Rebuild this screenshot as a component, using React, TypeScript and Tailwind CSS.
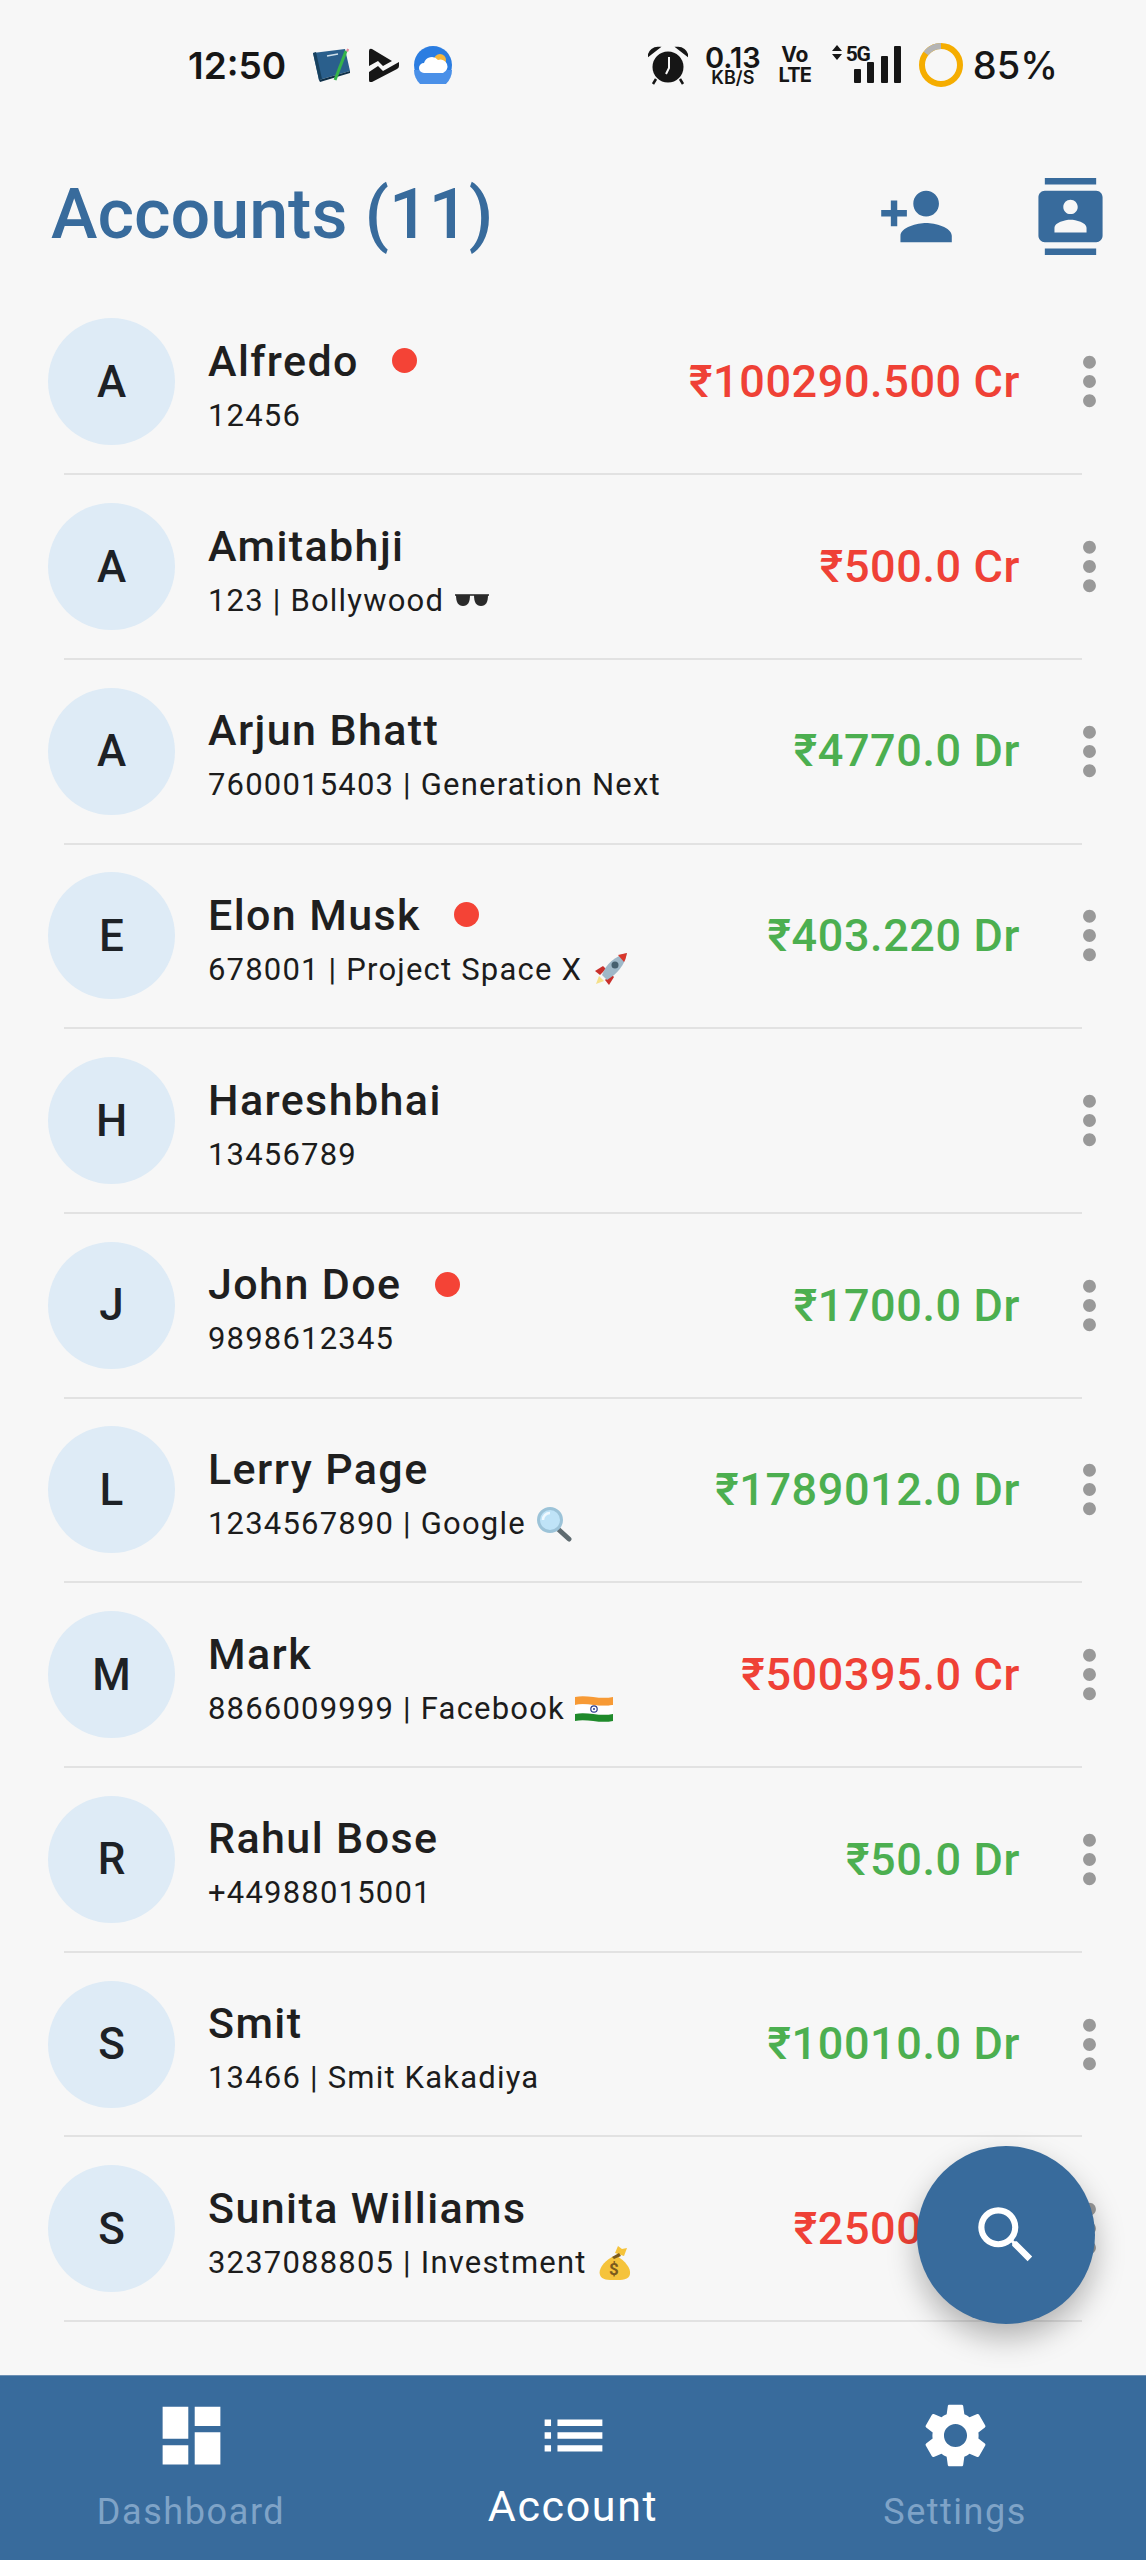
import type { ReactNode } from "react";
import {
  MdContacts,
  MdDashboard,
  MdList,
  MdMoreVert,
  MdPersonAdd,
  MdSearch,
  MdSettings,
} from "react-icons/md";

function Shades() {
  return (
    <svg viewBox="0 0 36 20" className="h-[20px] w-[36px]">
      <path d="M1 3h34v2H1z" fill="#555" />
      <path d="M2 4h14c0 7-2 11-7 11S2 11 2 4z" fill="#2a2a2a" />
      <path d="M20 4h14c0 7-2 11-7 11s-7-4-7-11z" fill="#2a2a2a" />
    </svg>
  );
}

function Rocket() {
  return (
    <svg viewBox="0 0 36 36" className="h-[36px] w-[36px]">
      <path d="M4 32l3-8 5 5z" fill="#f5e08a" />
      <path d="M3 19l8-5 3 3-6 6z" fill="#c9302c" />
      <path d="M17 33l5-8-3-3-6 6z" fill="#c9302c" />
      <path d="M10 23C14 12 23 4 35 1c-2 12-10 21-20 27z" fill="#9fb8c8" />
      <path d="M26 3l9-2c-1 3-1 6-3 9z" fill="#d9372c" />
      <circle cx="23" cy="13" r="3.5" fill="#46606f" />
    </svg>
  );
}

function Lens() {
  return (
    <svg viewBox="0 0 36 36" className="h-[36px] w-[36px]">
      <path d="M22 23l11 10" stroke="#5f6b70" strokeWidth="5" strokeLinecap="round" />
      <circle cx="14" cy="14" r="11.5" fill="#bfe3f7" stroke="#9cc3d8" strokeWidth="3" />
      <path d="M7 14c0-4 3-7 7-7" stroke="#eef9ff" strokeWidth="2.5" fill="none" />
    </svg>
  );
}

function Flag() {
  return (
    <svg viewBox="0 0 38 28" className="h-[28px] w-[38px]">
      <path d="M0 2c12-3 24 3 38 0v8c-14 3-26-3-38 0z" fill="#f79a35" />
      <path d="M0 10c12-3 24 3 38 0v9c-14 3-26-3-38 0z" fill="#ffffff" />
      <path d="M0 19c12-3 24 3 38 0v7c-14 3-26-3-38 0z" fill="#1f8a2b" />
      <circle cx="19" cy="14" r="3.2" fill="none" stroke="#2b3a8c" strokeWidth="1.2" />
      <circle cx="19" cy="14" r="1" fill="#2b3a8c" />
    </svg>
  );
}

function MoneyBag() {
  return (
    <svg viewBox="0 0 36 36" className="h-[36px] w-[36px]">
      <path d="M18 8l3-7 4 3 5-1-3 8z" fill="#f5c33b" />
      <path d="M15 12C6 17 1 25 3 30c2 5 8 5 15 5s14 0 15-6c1-6-5-13-13-18z" fill="#f5c33b" />
      <path d="M15 12l7-4 2 3-7 3z" fill="#7a5a1e" />
      <text x="17" y="30" fontSize="17" fontWeight="700" fill="#7a5a1e" fontFamily="Roboto, sans-serif" textAnchor="middle">$</text>
    </svg>
  );
}

type Account = {
  name: string;
  sub: string;
  emoji?: ReactNode;
  dot?: boolean;
  amount?: string;
  credit?: boolean;
};

const accounts: Account[] = [
  { name: "Alfredo", sub: "12456", dot: true, amount: "₹100290.500 Cr", credit: true },
  { name: "Amitabhji", sub: "123 | Bollywood", emoji: <Shades />, amount: "₹500.0 Cr", credit: true },
  { name: "Arjun Bhatt", sub: "7600015403 | Generation Next", amount: "₹4770.0 Dr" },
  { name: "Elon Musk", sub: "678001 | Project Space X", emoji: <Rocket />, dot: true, amount: "₹403.220 Dr" },
  { name: "Hareshbhai", sub: "13456789" },
  { name: "John Doe", sub: "9898612345", dot: true, amount: "₹1700.0 Dr" },
  { name: "Lerry Page", sub: "1234567890 | Google", emoji: <Lens />, amount: "₹1789012.0 Dr" },
  { name: "Mark", sub: "8866009999 | Facebook", emoji: <Flag />, amount: "₹500395.0 Cr", credit: true },
  { name: "Rahul Bose", sub: "+44988015001", amount: "₹50.0 Dr" },
  { name: "Smit", sub: "13466 | Smit Kakadiya", amount: "₹10010.0 Dr" },
  { name: "Sunita Williams", sub: "3237088805 | Investment", emoji: <MoneyBag />, amount: "₹2500.0 Cr", credit: true },
];

function StatusBar() {
  return (
    <div className="flex h-[130px] items-center pl-[188px] pr-[88px] font-['Inter'] text-[#161616]">
      <span className="text-[37px] font-semibold leading-none">12:50</span>
      {/* notification icons */}
      <svg viewBox="0 0 38 34" className="ml-[27px] h-[34px] w-[38px]">
        <path d="M0 5L32 1l5 22-31 9z" fill="#2a5f8c" />
        <path d="M0 5l3-1 6 27-3 1z" fill="#17415f" />
        <path d="M6 32l31-9v2L7 34z" fill="#0f3048" />
        <path d="M14 8l11-2" stroke="#cfe0ea" strokeWidth="1.5" />
        <path d="M33 3L22 32" stroke="#35b34a" strokeWidth="3" />
        <path d="M33 3l1.2-2.5 2 1L35 4z" fill="#e58a9a" />
      </svg>
      <svg viewBox="0 0 31 34" className="ml-[17px] h-[34px] w-[31px]">
        <path d="M1 3Q1 0 4 1L24 13 15 18 10 13 1 18z" fill="#161616" />
        <path d="M1 24l9-6 5 5 16-9v4q0 2-2 3L4 34q-3 1-3-2z" fill="#161616" />
      </svg>
      <svg viewBox="0 0 38 38" className="ml-[15px] h-[38px] w-[38px]">
        <circle cx="19" cy="19" r="19" fill="#2b7de1" />
        <path d="M0 24h38a19 19 0 0 1-38 0z" fill="#4a90e8" />
        <circle cx="26" cy="14" r="6" fill="#f6b73c" />
        <path d="M10 27a5 5 0 0 1 0-10 8 8 0 0 1 14-3 6 6 0 0 1 5 13z" fill="#ffffff" />
      </svg>

      <div className="ml-auto flex items-center">
        <svg viewBox="0 0 40 40" className="h-[40px] w-[40px]">
          <circle cx="20" cy="22" r="15.5" fill="#161616" />
          <path d="M1 10a9 9 0 0 1 9-7L1 10zM39 10a9 9 0 0 0-9-7l9 7z" fill="#161616" stroke="#161616" strokeWidth="2.5" />
          <path d="M8 34l-3 5M32 34l3 5" stroke="#161616" strokeWidth="2.5" />
          <path d="M21 12v11l-3 6" stroke="#f7f7f7" strokeWidth="2" fill="none" />
        </svg>
        <div className="ml-[18px] flex w-[54px] flex-col items-center font-semibold">
          <span className="text-[29px] leading-[25px]">0.13</span>
          <span className="text-[18px] leading-[15px]">KB/S</span>
        </div>
        <div className="ml-[18px] flex w-[34px] flex-col items-center font-bold">
          <span className="text-[21px] leading-[20px]">Vo</span>
          <span className="text-[20px] leading-[20px] tracking-[-0.8px]">LTE</span>
        </div>
        <div className="relative ml-[19px] h-[40px] w-[72px]">
          <svg viewBox="0 0 72 40" className="h-[40px] w-[72px]">
            <path d="M1 6l5-6 5 6zM1 9h10l-5 6z" fill="#161616" />
            <rect x="23" y="24" width="7" height="14" rx="1" fill="#161616" />
            <rect x="36" y="17" width="7" height="21" rx="1" fill="#161616" />
            <rect x="50" y="11" width="7" height="27" rx="1" fill="#161616" />
            <rect x="63" y="1" width="7" height="37" rx="1" fill="#161616" />
          </svg>
          <span className="absolute left-[15px] top-[-1px] font-['Roboto'] text-[21px] font-bold leading-[20px] tracking-[-1.4px]">
            5G
          </span>
        </div>
        <svg viewBox="0 0 44 44" className="ml-[16px] h-[44px] w-[44px]">
          <circle cx="22" cy="22" r="19" fill="none" stroke="#f5ad00" strokeWidth="6" />
          <path d="M22 3A19 19 0 0 0 7 10.5" fill="none" stroke="#b4b4b4" strokeWidth="6" />
        </svg>
        <span className="ml-[10px] text-[38px] font-medium leading-none">85%</span>
      </div>
    </div>
  );
}

function Row({ account }: { account: Account }) {
  return (
    <div className="h-[184.7px]">
      <div className="flex h-[182.7px] items-center pl-[48px] pr-[18px] font-['Roboto']">
        <div className="flex h-[127px] w-[127px] shrink-0 items-center justify-center rounded-full bg-[#deebf6] text-[44px] font-medium text-[#1d2126]">
          {account.name[0]}
        </div>
        <div className="ml-[33px] flex min-w-0 flex-1 flex-col pt-[8px]">
          <div className="flex h-[50px] items-center">
            <span className="text-[43px] font-medium leading-[50px] tracking-[1.4px] text-[#1f1f1f]">
              {account.name}
            </span>
            {account.dot && (
              <span className="ml-[33px] h-[25px] w-[25px] rounded-full bg-[#f44336]" />
            )}
          </div>
          <div className="mt-[10px] flex h-[40px] items-center">
            <span className="text-[31px] leading-[40px] tracking-[1.2px] text-[#1c1c1c]">
              {account.sub}
            </span>
            {account.emoji && (
              <span className="ml-[10px] flex items-center">{account.emoji}</span>
            )}
          </div>
        </div>
        {account.amount && (
          <span
            className={
              account.credit
                ? "text-[45px] font-medium tracking-[0.6px] text-[#ef4136]"
                : "text-[45px] font-medium tracking-[0.6px] text-[#4caf50]"
            }
          >
            {account.amount}
          </span>
        )}
        <MdMoreVert className="ml-[31px] h-[77px] w-[77px] shrink-0 text-[#999999]" />
      </div>
      <div className="mx-[64px] h-[2px] bg-[#e2e2e2]" />
    </div>
  );
}

export default function App() {
  return (
    <div className="relative flex h-[2560px] w-[1146px] flex-col overflow-hidden bg-[#f7f7f7]">
      <StatusBar />

      <header className="mt-[48px] flex h-[77px] items-center pl-[51px] pr-[37px] text-[#386b9c]">
        <h1 className="pb-[6px] font-['Roboto'] text-[70px] font-medium leading-none">Accounts (11)</h1>
        <MdPersonAdd className="ml-auto h-[77px] w-[77px]" />
        <MdContacts className="ml-[77px] h-[77px] w-[77px]" />
      </header>

      <div className="mt-[35.5px] flex-1">
        {accounts.map((a) => (
          <Row key={a.name} account={a} />
        ))}
      </div>

      <button className="absolute left-[917px] top-[2146px] flex h-[178px] w-[178px] items-center justify-center rounded-full bg-[#386b9c] text-white shadow-[0_14px_30px_rgba(0,0,0,0.28)]">
        <MdSearch className="h-[74px] w-[74px]" />
      </button>

      <nav className="grid h-[185px] grid-cols-3 border-t border-[#6d90b4] bg-[#386b9c] font-['Roboto']">
        <div className="flex flex-col items-center pt-[21px] text-[#7fa3c7]">
          <MdDashboard className="h-[77px] w-[77px] text-white" />
          <span className="mt-[16px] text-[36px] leading-[44px] tracking-[1.6px]">Dashboard</span>
        </div>
        <div className="flex flex-col items-center pt-[21px] text-white">
          <MdList className="h-[77px] w-[77px]" />
          <span className="mt-[8px] text-[43px] leading-[48px] tracking-[1.6px]">Account</span>
        </div>
        <div className="flex flex-col items-center pt-[21px] text-[#7fa3c7]">
          <MdSettings className="h-[77px] w-[77px] text-white" />
          <span className="mt-[16px] text-[36px] leading-[44px] tracking-[1.5px]">Settings</span>
        </div>
      </nav>
    </div>
  );
}
